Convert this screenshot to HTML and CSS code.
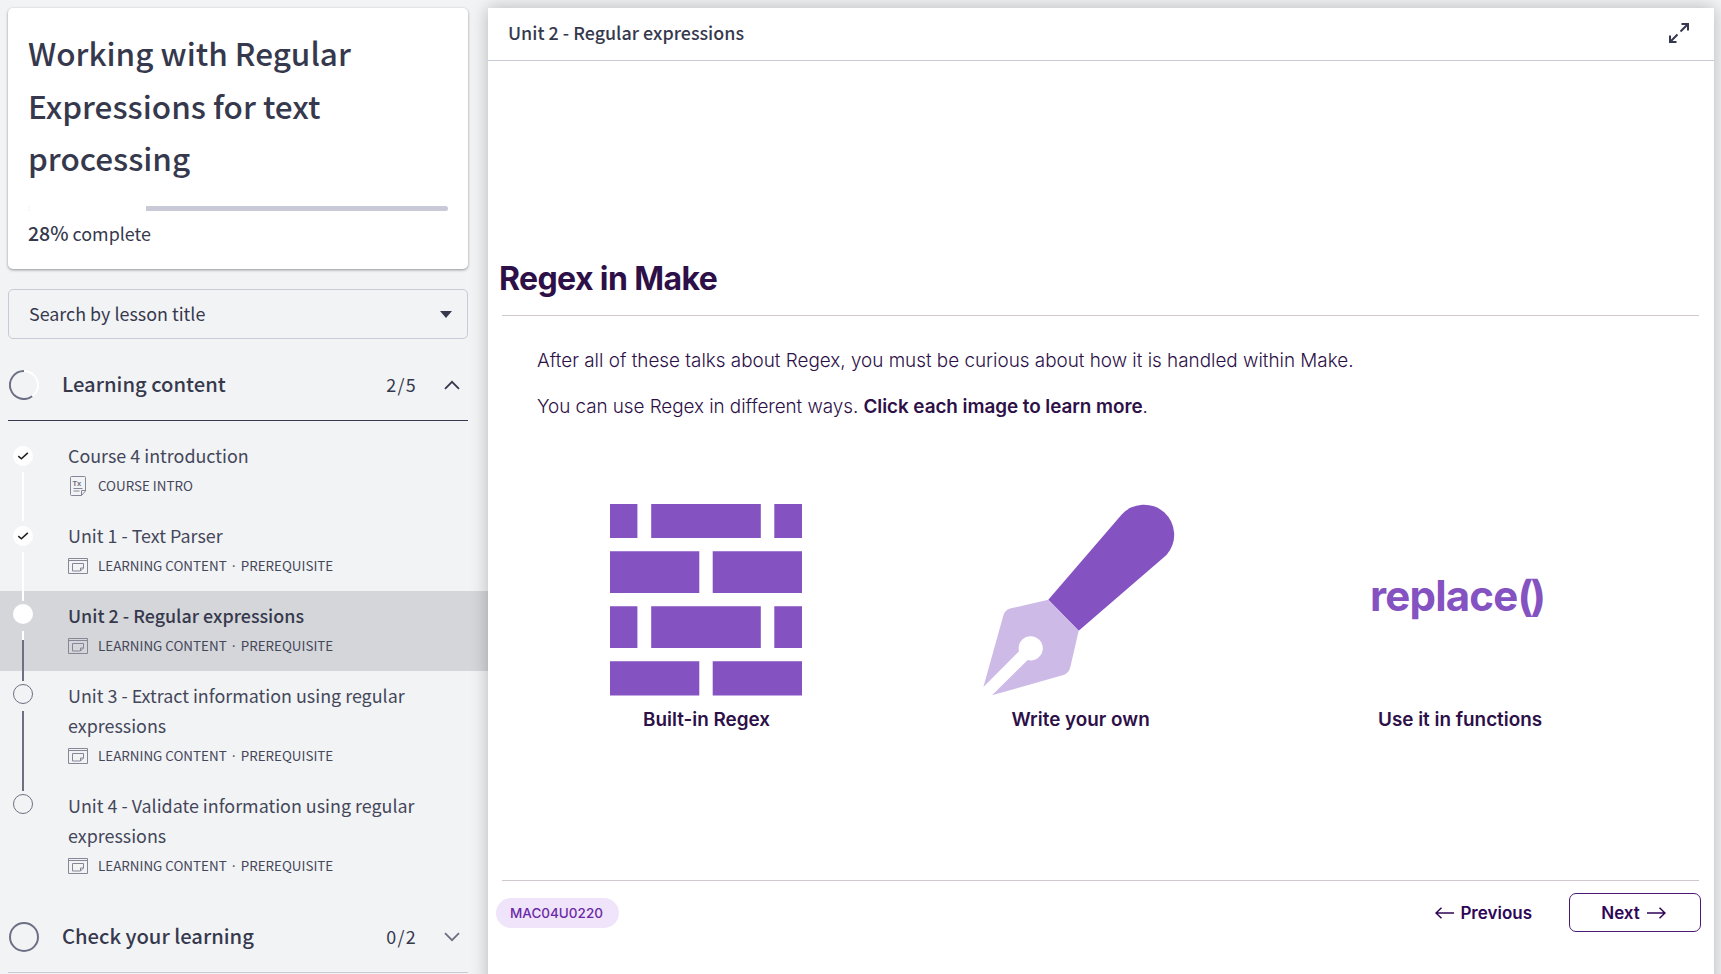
FILE: index.html
```html
<!DOCTYPE html>
<html lang="en">
<head>
<meta charset="utf-8">
<title>Working with Regular Expressions for text processing</title>
<link rel="stylesheet" href="styles.css">
</head>
<body>
<svg class="defs" width="0" height="0" aria-hidden="true">
  <symbol id="i-window" viewBox="0 0 20 16"><path d="M.5.500h19v15H.5zM.5 2.500h19M4.500 5.500h11v4.500l-3 3h-8zM15.500 10h-3v3" fill="none" stroke="currentColor"/></symbol>
  <symbol id="i-check" viewBox="0 0 20 20"><path d="M5.300 10.200l3.100 2.600 6.400-6" fill="none" stroke="#222" stroke-width="1.600"/></symbol>
</svg>
<div class="app">
  <aside class="sidebar">
    <section class="course-card">
      <h1>Working with Regular Expressions for text processing</h1>
      <div class="progress"><div class="progress-done" style="width:28%"></div></div>
      <p class="percent"><b>28%</b> complete</p>
    </section>
    <div class="search"><span>Search by lesson title</span><svg width="12" height="7" viewBox="0 0 12 7"><path d="M0 0h12L6 7z" fill="#36394d"/></svg></div>

    <div class="section open">
      <svg class="ring" width="30" height="30" viewBox="0 0 30 30"><circle cx="15" cy="15" r="14" fill="none" stroke="#fff" stroke-width="2"/><path d="M15 1A14 14 0 1 0 23.200 26.300" fill="none" stroke="#6d7083" stroke-width="2"/></svg>
      <h2>Learning content</h2><span class="count">2/5</span>
      <svg class="chev" width="16" height="10" viewBox="0 0 16 10"><path d="M1 8.800l7-7 7 7" fill="none" stroke="#36394d" stroke-width="1.800"/></svg>
    </div>
    <ul class="lessons">
      <li class="lesson done">
        <div class="track"><svg class="dot" width="20" height="20"><use href="#i-check"/></svg><i class="line"></i></div>
        <div class="info"><div class="name">Course 4 introduction</div>
        <div class="meta"><svg width="20" height="20" viewBox="0 0 20 20"><path d="M3.500.5h13q1 0 1 1V15l-4 4.500h-10q-1 0-1-1v-17q0-1 1-1zM17.500 14.500h-4v5M5.500 12.500h9M5.500 15h6" fill="none" stroke="currentColor"/><text class="tx" x="4.500" y="9.500">Tx</text></svg><span>COURSE INTRO</span></div></div>
      </li>
      <li class="lesson done">
        <div class="track"><svg class="dot" width="20" height="20"><use href="#i-check"/></svg><i class="line"></i></div>
        <div class="info"><div class="name">Unit 1 - Text Parser</div>
        <div class="meta"><svg width="20" height="16"><use href="#i-window"/></svg><span>LEARNING CONTENT</span><span class="sep">·</span><span>PREREQUISITE</span></div></div>
      </li>
      <li class="lesson current">
        <div class="track"><i class="dot"></i><i class="line"></i></div>
        <div class="info"><div class="name">Unit 2 - Regular expressions</div>
        <div class="meta"><svg width="20" height="16"><use href="#i-window"/></svg><span>LEARNING CONTENT</span><span class="sep">·</span><span>PREREQUISITE</span></div></div>
      </li>
      <li class="lesson">
        <div class="track"><i class="dot"></i><i class="line"></i></div>
        <div class="info"><div class="name">Unit 3 - Extract information using regular<br>expressions</div>
        <div class="meta"><svg width="20" height="16"><use href="#i-window"/></svg><span>LEARNING CONTENT</span><span class="sep">·</span><span>PREREQUISITE</span></div></div>
      </li>
      <li class="lesson">
        <div class="track"><i class="dot"></i></div>
        <div class="info"><div class="name">Unit 4 - Validate information using regular<br>expressions</div>
        <div class="meta"><svg width="20" height="16"><use href="#i-window"/></svg><span>LEARNING CONTENT</span><span class="sep">·</span><span>PREREQUISITE</span></div></div>
      </li>
    </ul>
    <div class="section">
      <svg class="ring" width="30" height="30" viewBox="0 0 30 30"><circle cx="15" cy="15" r="14" fill="none" stroke="#6d7083" stroke-width="2"/></svg>
      <h2>Check your learning</h2><span class="count">0/2</span>
      <svg class="chev" width="16" height="10" viewBox="0 0 16 10"><path d="M1 1.200l7 7 7-7" fill="none" stroke="#6d7083" stroke-width="1.800"/></svg>
    </div>
  </aside>

  <main class="panel">
    <header class="panel-head"><span>Unit 2 - Regular expressions</span>
      <svg width="20" height="20" viewBox="0 0 20 20"><path d="M12.500 1H19v6.500M19 1l-7.500 7.500M7.500 19H1v-6.500M1 19l7.500-7.500" fill="none" stroke="#36394d" stroke-width="2"/></svg>
    </header>
    <article class="slide">
      <h2 class="slide-title"><span>Regex in Make</span></h2>
      <div class="copy">
        <p>After all of these talks about Regex, you must be curious about how it is handled within Make.</p>
        <p class="hint">You can use Regex in different ways. <b>Click each image to learn more</b>.</p>
      </div>
      <div class="choices">
        <figure class="choice-wall">
          <svg width="192" height="192" viewBox="0 0 192 192" fill="#8552c1"><path d="M0 0h27.400v34H0zM41.200 0h109.600v34H41.200zM164.300 0H192v34h-27.700zM0 47.300h89.300V89H0zM102.700 47.300H192V89h-89.300zM0 102.300h27.400V144H0zM41.200 102.300h109.600V144H41.200zM164.300 102.300H192V144h-27.700zM0 157.300h89.300v34.200H0zM102.700 157.300H192v34.200h-89.300z"/></svg>
          <figcaption>Built-in Regex</figcaption>
        </figure>
        <figure class="choice-pen">
          <svg width="192" height="192" viewBox="0 0 192 192"><path d="M65.300 95.700L138.500 10.700A30 30 0 0 1 183.500 51L95.700 126.700z" fill="#8552c1"/><path d="M65.300 95.700L28 104.300Q21.500 106 20.200 112L.4 183 36 147.300A12.100 12.100 0 1 1 44.700 156L9 191.300 79.500 171.300Q86 169.500 87.400 162.700L95.700 126.700z" fill="#cdbae7"/></svg>
          <figcaption>Write your own</figcaption>
        </figure>
        <figure class="choice-func">
          <div class="func">replace<span class="parens">()</span></div>
          <figcaption>Use it in functions</figcaption>
        </figure>
      </div>
      <footer class="slide-foot">
        <span class="tag">MAC04U0220</span>
        <a class="prev"><svg width="19" height="12" viewBox="0 0 19 12"><path d="M19 6H1M6.500.700L1 6l5.500 5.300" fill="none" stroke="currentColor" stroke-width="1.500"/></svg>Previous</a>
        <a class="next">Next<svg width="19" height="12" viewBox="0 0 19 12"><path d="M0 6h18M12.500.700L18 6l-5.500 5.300" fill="none" stroke="currentColor" stroke-width="1.500"/></svg></a>
      </footer>
    </article>
  </main>
</div>
</body>
</html>
```
FILE: styles.css
```css
* { box-sizing: border-box; }
body { margin: 0; height: 974px; overflow: hidden; background: #f2f3f5; color: #36394d; font-family: "Noto Sans CJK JP", "Noto Sans", sans-serif; font-size: 17.900px; line-height: 30px; }
h1, h2, p, ul, figure { margin: 0; padding: 0; }
svg { display: block; flex: none; }
.defs { position: absolute; }
.app { display: flex; height: 974px; }

.sidebar { width: 488px; padding-top: 8px; flex: none; }
.course-card { width: 460px; height: 261px; margin-left: 8px; padding: 18px 20px 0; background: #fff; border-radius: 5px; box-shadow: 0 1px 3px rgba(0, 0, 0, .4); }
.course-card h1 { font-size: 31.500px; line-height: 52.500px; font-weight: 500; }
.progress { height: 5px; margin-top: 22.500px; background: #c9cad8; border-radius: 3px; overflow: hidden; }
.progress-done { height: 5px; background: #fff; }
.percent { margin-top: 7px; font-weight: 400; }
.percent b { font-weight: 500; font-size: 19.500px; }
.search { width: 460px; height: 50px; margin: 20px 0 0 8px; padding: 0 15px 0 20px; display: flex; align-items: center; justify-content: space-between; border: 1px solid #c9cad8; border-radius: 5px; font-weight: 400; }
.search span { margin-top: -3px; }

.section { width: 460px; height: 82px; margin-left: 8px; padding: 11px 8px 0 1px; display: flex; align-items: center; border-bottom: 1px solid #c9cad8; }
.section h2, .count { margin-top: -2px; }
.section.open { border-color: #36394d; }
.section h2 { margin-left: 23px; font-size: 20.200px; font-weight: 500; }
.count { margin-left: auto; font-weight: 400; letter-spacing: 1.300px; }
.chev { margin-left: 27px; }

.lessons { list-style: none; margin-top: 10px; }
.lesson { display: flex; min-height: 80px; padding-left: 13px; }
.lesson.current { background: #d5d6da; }
.track { width: 20px; padding-top: 13px; display: flex; flex-direction: column; align-items: center; }
.done .track { padding-top: 15px; }
.dot { flex: none; width: 20px; height: 20px; border: 1px solid #6d7083; border-radius: 50%; }
.done .dot, .current .dot { border: 0; background: #fff; }
.line { width: 2px; flex: 1; margin: 7px 0 -10px; background: #6d7083; z-index: 1; }
.done .line { margin: 6px 0 -10px; background: #fff; }
.current .line { background: linear-gradient(#fff 9px, #6d7083 9px); }
.info { margin-left: 35px; padding: 9px 0 11px; font-weight: 400; color: #44475a; }
.current .name { font-weight: 500; color: #36394d; }
.meta { display: flex; align-items: center; height: 30px; font-size: 13.400px; }
.meta svg { margin: 1px 10px 0 0; color: #858797; }
.meta .sep { width: 14px; text-align: center; }
.tx { font: 700 7.500px "Liberation Sans", sans-serif; fill: #6d7083; }

.panel { width: 1226px; height: 980px; margin-top: 8px; background: #fff; box-shadow: 0 0 16px rgba(0, 0, 0, .25); font-family: Inter, sans-serif; color: #2d1047; }
.panel-head { height: 53px; padding: 0 25px 3px 20px; display: flex; align-items: center; justify-content: space-between; border-bottom: 1px solid #c9cad6; color: #36394d; font-family: "Noto Sans CJK JP", "Noto Sans", sans-serif; font-weight: 500; }
.panel-head span { margin-top: -2px; }
.slide { padding: 193px 15px 0 14px; }
.slide-title { height: 62px; padding-top: 5px; font-size: 32px; line-height: 40px; font-weight: 700; border-bottom: 1px solid #cfc9cf; }
.slide-title span { margin-left: -3px; letter-spacing: -.6px; }
.copy { padding: 30px 0 0 35px; font-size: 18.870px; font-weight: 300; }
.copy p { height: 46px; }
.copy .hint { letter-spacing: -.05px; }
.copy b { font-weight: 600; }
.choices { height: 443px; padding: 66px 0 0 108px; display: flex; border-bottom: 1px solid #cfc9cf; }
.choices figure { flex: none; }
.choices figcaption { font-size: 18.870px; margin: 9px 0 0 33px; font-weight: 600; white-space: nowrap; }
.choice-wall { width: 373px; }
.choice-pen { width: 387px; }
.choices .choice-pen figcaption { margin-left: 28.500px; }
.choices .choice-func figcaption { margin-left: 8px; }
.func { height: 192px; padding-top: 65px; font-size: 42px; line-height: 54px; font-weight: 700; color: #8552c1; letter-spacing: -.8px; }
.parens { letter-spacing: -3px; }
.slide-foot { display: flex; align-items: center; height: 63px; margin: 0 -2px 0 -6px; font-size: 17px; font-weight: 600; color: #2f0657; }
.tag { height: 30px; padding: 0 14px; width: 123px; background: #f0e4fb; border-radius: 15px; font-size: 13.500px; font-weight: 500; color: #6b2aa6; }
.prev { display: flex; align-items: center; gap: 6px; margin-left: auto; }
.next { display: flex; align-items: center; justify-content: center; gap: 7px; width: 132px; height: 39px; padding-right: 3px; margin-left: 37px; border: 1.500px solid #4a1a75; border-radius: 7px; }
```
